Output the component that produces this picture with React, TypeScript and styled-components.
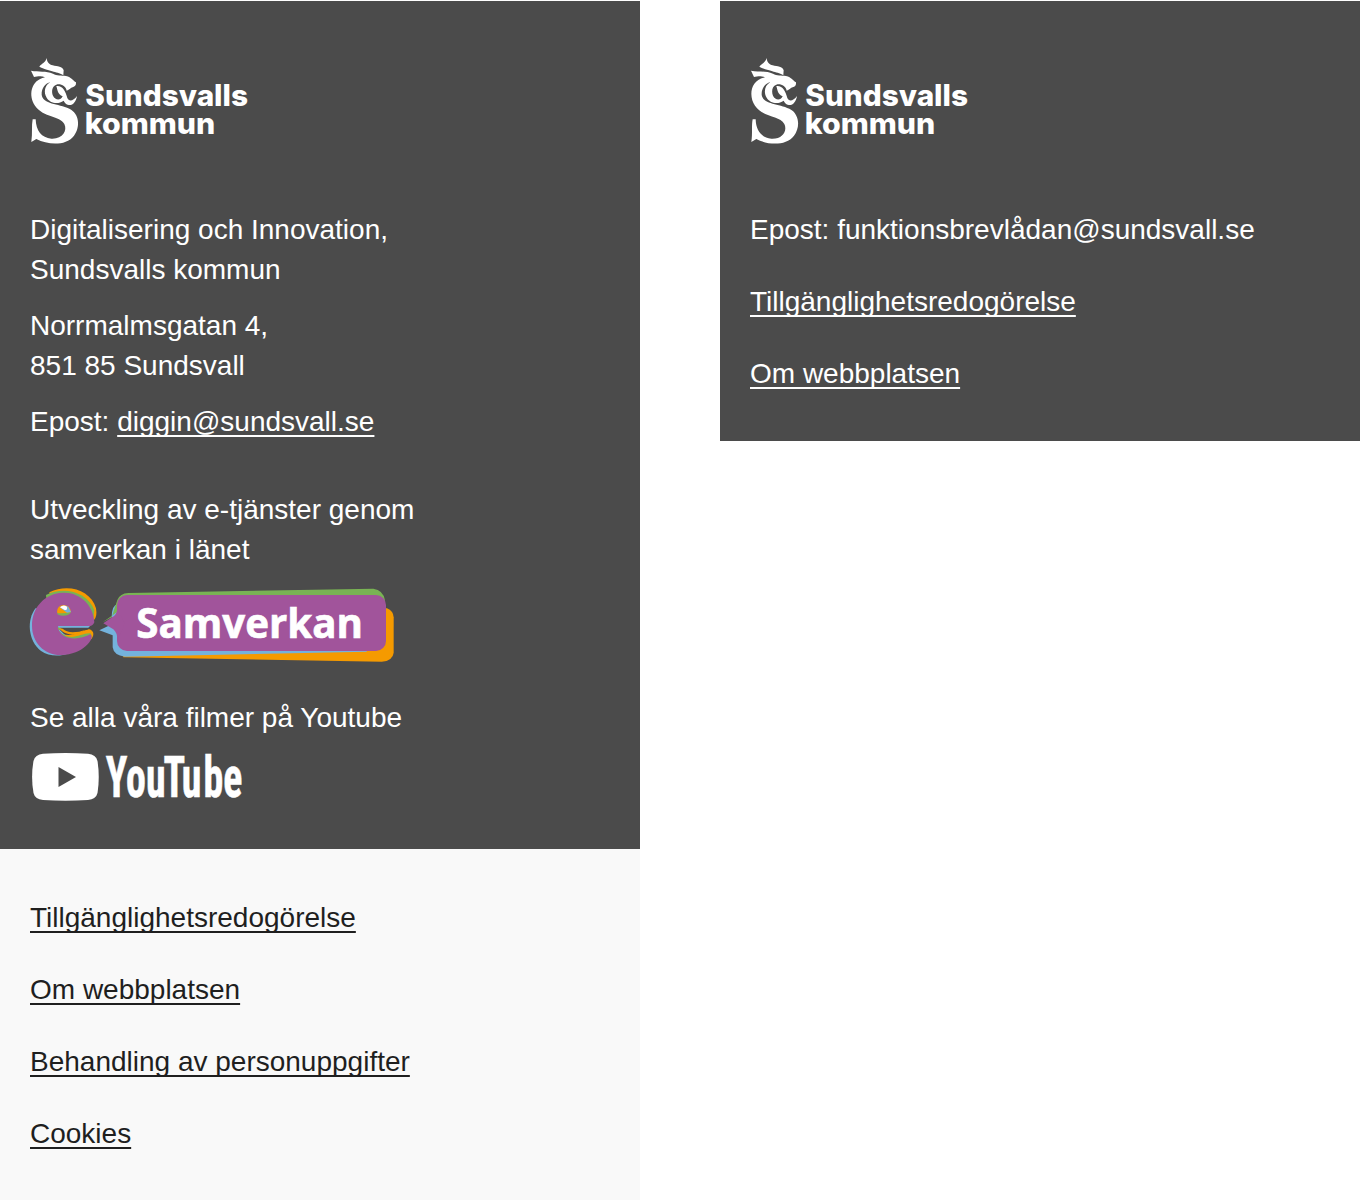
import React from "react";
import styled, { createGlobalStyle } from "styled-components";

const GlobalStyle = createGlobalStyle`
  * { box-sizing: border-box; }
  body { margin: 0; background: #fff; font-family: "Liberation Sans", Arial, sans-serif; }
`;

const Page = styled.main`
  display: grid;
  grid-template-columns: 640px 640px;
  column-gap: 80px;
  align-items: start;
  padding-top: 1px;
  height: 1200px;
  overflow: hidden;
  font-size: 28px;
  line-height: 40px;
`;

const Panel = styled.section<{ $tone: "dark" | "light" }>`
  padding: ${(p) => (p.$tone === "dark" ? "48px 30px 47px" : "49px 30px 60px")};
  background: ${(p) => (p.$tone === "dark" ? "#4b4b4b" : "#f9f9f9")};
  color: ${(p) => (p.$tone === "dark" ? "#fff" : "#1f1f1f")};
`;

const Brand = styled.div`
  height: 161px;
`;

const Text = styled.p<{ $gap?: number }>`
  margin: 0 0 ${(p) => p.$gap ?? 0}px;
`;

const Link = styled.a`
  color: inherit;
  text-decoration: underline;
  text-decoration-thickness: 2px;
  text-underline-offset: 4px;
  text-decoration-skip-ink: none;
`;

const LinkList = styled.ul`
  display: flex;
  flex-direction: column;
  gap: 32px;
  margin: 0;
  padding: 0;
  list-style: none;
`;

const Picture = styled.svg<{ $bottom?: number }>`
  display: block;
  overflow: visible;
  margin-bottom: ${(p) => p.$bottom ?? 0}px;
`;

const Municipality = () => (
  <Brand>
    <Picture width="220" height="100" viewBox="50 -3 660 300" preserveAspectRatio="xMinYMin" role="img" aria-label="Sundsvalls kommun">
      <g fill="#fff" transform="translate(20 0)">
        <path d="M80 24C81 37 88 44 98 46C112 50 128 49 131 61L130 76C125 70 111 68 101 65C88 60 75 59 58 50C64 41 77 38 80 24Z" />
        <path d="M33 62C56 66 78 62 99 71C111 78 123 75 138 78C155 82 159 92 168 97C169 106 165 110 158 112C152 113 149 119 140 122C138 109 122 100 109 104C96 108 94 125 99 137C106 151 121 153 128 139C121 137 115 130 113 123L109 108C128 106 136 122 142 144C147 156 160 153 171 138C168 156 158 167 146 165C138 164 134 158 131 152C112 166 89 158 80 143C70 128 74 105 91 97C77 99 64 115 65 134C69 163 114 160 148 176C178 190 182 231 162 257C137 289 84 285 49 267L34 276C38 250 34 227 38 208L47 208C48 242 65 264 94 266C127 268 143 242 133 222C119 195 72 205 45 167C25 138 31 91 75 82C62 76 50 81 42 81Z" />
      </g>
      <g fill="#fff" fontFamily="Inter, sans-serif" fontWeight="800" fontSize="88">
        <text x="216" y="169" textLength="488" lengthAdjust="spacingAndGlyphs">Sundsvalls</text>
        <text x="214" y="252" textLength="392" lengthAdjust="spacingAndGlyphs">kommun</text>
      </g>
    </Picture>
  </Brand>
);

const Samverkan = () => (
  <Picture width="370" height="80" viewBox="0 0 1110 240" role="img" aria-label="e-Samverkan" $bottom={34}>
    <g transform="translate(-30 -12)">
      <path fill="#f59a00" d="M88 37C145 9 213 31 228 85C231 102 229 113 222 120L115 145L118 154C145 181 182 151 206 147C225 152 223 170 211 180L120 205Z" />
      <path fill="#74b2dc" d="M48 83C18 119 25 183 62 212C100 239 151 223 175 206L140 170L105 135Z" />
      <path fill="#79b354" d="M78 45C134 17 204 38 223 91L219 125L116 151C151 191 181 158 211 160C226 174 191 202 161 214L92 205Z" />
      <path fill="#a1549b" d="M128 38C183 36 221 78 223 127C220 135 214 139 205 139L113 140C121 181 174 183 211 163C228 175 187 225 125 225C73 227 36 187 36 137C36 78 78 40 128 38Z" />
      <path fill="#f59a00" d="M111 96Q112 75 132 75Q151 77 153 96Q146 105 128 105Q114 104 111 96Z" />
      <path fill="#79b354" d="M111 99Q132 101 153 96Q149 107 129 107Q113 107 111 99Z" />
      <path fill="#74b2dc" d="M119 82Q131 73 145 80L153 96L141 98Z" />
      <path fill="#fff" d="M120 82Q129 72 141 80Q143 91 134 90Z" />
      <path fill="#4b4b4b" d="M117 142L214 141Q210 148 195 151C170 163 145 164 128 150Z" />
      <path fill="#f59a00" d="M117 144Q130 162 158 164Q177 163 195 150Q179 157 158 157Q139 156 128 146Z" />
      <path fill="#74b2dc" d="M114 138H210L205 143H116Z" />
      <path fill="#f59a00" d="M305 210L1040 80L1101 85Q1120 93 1121 112V218Q1118 243 1085 245L310 232Z" />
      <path fill="#74b2dc" d="M238 151L277 132L275 110Q276 76 292 73L1040 70V215L315 230Q281 226 278 202V166Z" />
      <path fill="#79b354" d="M248 127L275 112L292 60Q300 40 325 39L1060 26Q1090 30 1095 61L1080 90H300Z" />
      <rect x="291" y="45" width="807" height="168" rx="30" fill="#a1549b" />
      <path fill="#a1549b" d="M250 130L276 112Q292 103 292 83L315 130L292 180Q292 158 280 148Z" />
      <text x="349" y="174" fill="#fff" stroke="#fff" strokeWidth="2" fontFamily="Open Sans, sans-serif" fontWeight="700" fontSize="123" textLength="680" lengthAdjust="spacingAndGlyphs">Samverkan</text>
    </g>
  </Picture>
);

const YouTube = () => (
  <Picture width="215" height="50" viewBox="30 752 215 50" role="img" aria-label="YouTube">
    <path fill="#fff" d="M43 753.8Q65.5 752.4 88 753.8Q96 754.5 97.5 761Q100 777 97.5 793Q96 799.2 88 800Q65.5 801.4 43 800Q35 799.2 33.5 793Q30.7 777 33.5 761Q35 754.5 43 753.8Z" />
    <path fill="#4b4b4b" d="M58.5 767L76 777L58.5 787Z" />
    <g transform="translate(105.7 797) scale(.7 1)">
      <text dx="0 0 0 -3 -3 3 0" fill="#fff" stroke="#fff" strokeWidth=".6" fontFamily="Roboto Condensed, Roboto, sans-serif" fontWeight="700" fontSize="57">YouTube</text>
    </g>
  </Picture>
);

const Links = ({ items }: { items: string[] }) => (
  <LinkList>
    {items.map((item) => (
      <li key={item}><Link>{item}</Link></li>
    ))}
  </LinkList>
);

export default function App() {
  return (
    <>
      <GlobalStyle />
      <Page>
        <div>
          <Panel $tone="dark">
            <Municipality />
            <Text $gap={16}>Digitalisering och Innovation,<br />Sundsvalls kommun</Text>
            <Text $gap={16}>Norrmalmsgatan 4,<br />851 85 Sundsvall</Text>
            <Text $gap={48}>Epost: <Link>diggin@sundsvall.se</Link></Text>
            <Text $gap={14}>Utveckling av e-tjänster genom<br />samverkan i länet</Text>
            <Samverkan />
            <Text $gap={14}>Se alla våra filmer på Youtube</Text>
            <YouTube />
          </Panel>
          <Panel $tone="light">
            <Links items={["Tillgänglighetsredogörelse", "Om webbplatsen", "Behandling av personuppgifter", "Cookies"]} />
          </Panel>
        </div>
        <Panel $tone="dark">
          <Municipality />
          <Text $gap={32}>Epost: funktionsbrevlådan@sundsvall.se</Text>
          <Links items={["Tillgänglighetsredogörelse", "Om webbplatsen"]} />
        </Panel>
      </Page>
    </>
  );
}
